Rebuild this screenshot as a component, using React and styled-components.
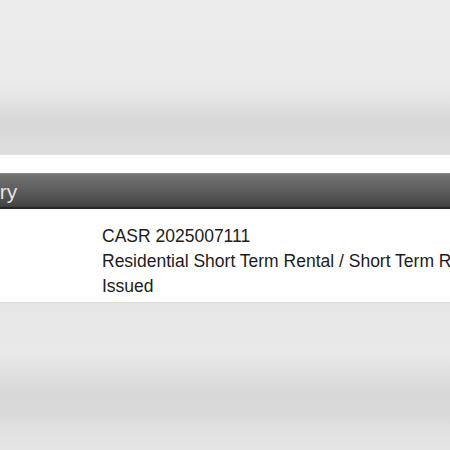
import React from 'react';
import styled, { createGlobalStyle } from 'styled-components';

const GlobalStyle = createGlobalStyle`
  html, body {
    margin: 0;
    padding: 0;
    background: #ffffff;
  }
  body {
    font-family: "Liberation Sans", Arial, Helvetica, sans-serif;
  }
`;

const Page = styled.div`
  width: 450px;
  height: 450px;
  overflow: hidden;
  display: flex;
  flex-direction: column;
  background: #ffffff;
`;

// soft grey panels above and below the record
const Shade = styled.div`
  flex: ${(p) => (p.fill ? '1 1 auto' : `0 0 ${p.h}px`)};
  background: ${(p) => p.bg};
  border-bottom: ${(p) => (p.line ? '1px solid #e2e2e2' : 'none')};
`;

const Gap = styled.div`
  flex: 0 0 ${(p) => p.h}px;
  background: #ffffff;
`;

const SectionBar = styled.div`
  flex: 0 0 36px;
  box-sizing: border-box;
  display: flex;
  align-items: center;
  padding-top: 3px;
  overflow: hidden;
  background: linear-gradient(to bottom, #8a8a8a 0px, #727272 2px, #5c5c5c 18px, #454545 32px, #3c3c3c 34px);
  border-bottom: 2px solid #262626;
`;

const SectionTitle = styled.h2`
  margin: 0 0 0 -48px;
  font-size: 21px;
  font-weight: normal;
  color: #e4e4e4;
  white-space: nowrap;
`;

const Details = styled.div`
  display: flex;
  flex-direction: column;
  padding: 15px 0 3px 102px;
  background: #ffffff;
  border-bottom: 1px solid #d9d9d9;
  overflow: hidden;
`;

const Line = styled.div`
  font-size: 17.5px;
  line-height: 25px;
  color: #1c1c1c;
  white-space: nowrap;
`;

export default function App() {
  return (
    <>
      <GlobalStyle />
      <Page>
        <Shade
          h={154}
          line
          bg="linear-gradient(to bottom, #ececec 0px, #ebebeb 80px, #e4e4e4 100px, #d9d9d9 118px, #d8d8d8 128px, #dcdcdc 140px, #dedede 154px)"
        />
        <Gap h={18} />
        <SectionBar>
          <SectionTitle>History</SectionTitle>
        </SectionBar>
        <Details>
          <Line>CASR 2025007111</Line>
          <Line>Residential Short Term Rental / Short Term Rental Permit</Line>
          <Line>Issued</Line>
        </Details>
        <Shade
          fill
          bg="linear-gradient(to bottom, #e6e6e6 0px, #e9e9e9 50px, #e0e0e0 70px, #d8d8d8 90px, #d9d9d9 110px, #e2e2e2 130px, #e6e6e6 150px)"
        />
      </Page>
    </>
  );
}
